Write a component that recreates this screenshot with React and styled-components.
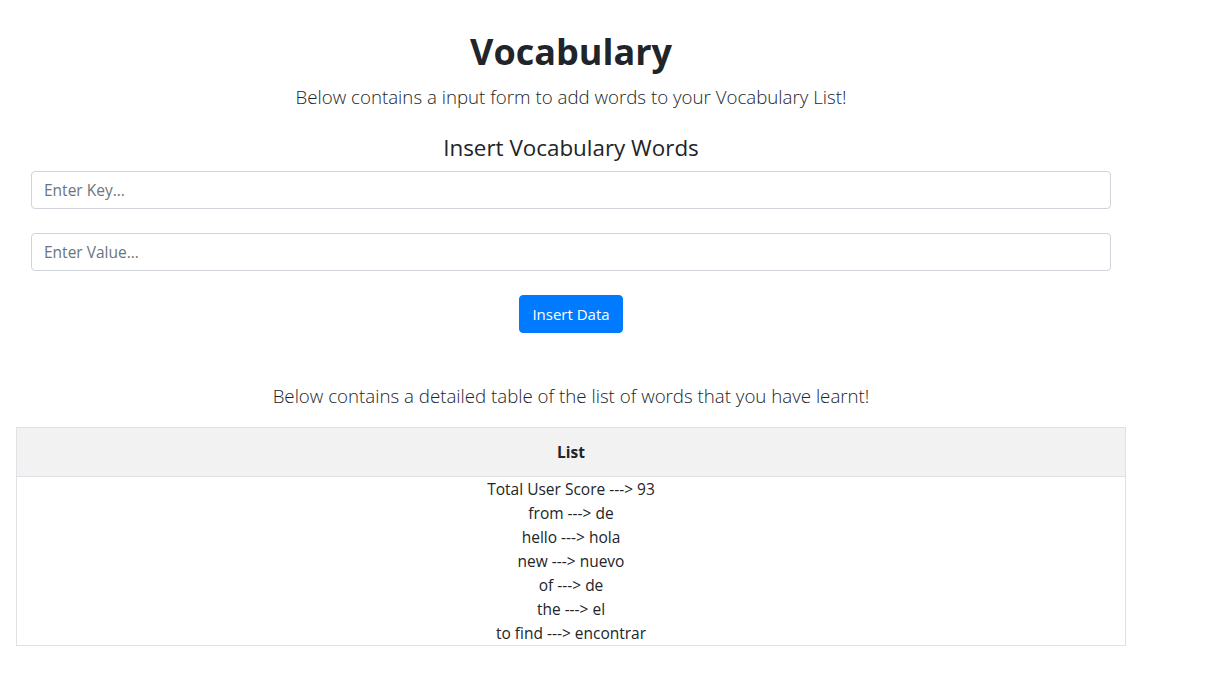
import styled, { createGlobalStyle } from "styled-components"

const GlobalStyle = createGlobalStyle`
    body {
        margin: 0;
        background: #fff;
        color: #212529;
        font-family: "Open Sans", "Noto Sans", sans-serif;
        font-size: 15.5px;
        line-height: 24px;
    }
`

const Page = styled.div`
    width: 1110px;
    margin: 0 16px;
    padding-top: 28px;
`
const Title = styled.h1`
    font-size: 36px;
    font-weight: 700;
    line-height: 48px;
    text-align: center;
    margin: 0 0 6px;
`
const Lead = styled.p`
    font-size: 18.7px;
    font-weight: 300;
    line-height: 30px;
    text-align: center;
    margin: ${props => props.top || 0}px 0 ${props => props.gap || 0}px;
`
const SubTitle = styled.h4`
    font-size: 22.4px;
    font-weight: 400;
    line-height: 29px;
    text-align: center;
    margin: 0 0 9px;
`
const Form = styled.form`
    display: flex;
    flex-direction: column;
    gap: 24px;
    padding: 0 15px;
`
const Input = styled.input`
    height: 38px;
    box-sizing: border-box;
    padding: 6px 12px;
    font-family: inherit;
    font-size: 15.5px;
    color: #495057;
    border: 1px solid #ced4da;
    border-radius: 4px;
    outline: none;
    &::placeholder {
        color: #6c757d;
    }
`
const Button = styled.button`
    align-self: center;
    height: 38px;
    padding: 0 12px;
    font-family: inherit;
    font-size: 15px;
    color: #fff;
    background: #007bff;
    border: 1px solid #007bff;
    border-radius: 4px;
`
const Table = styled.table`
    width: 100%;
    border-collapse: collapse;
    border: 1px solid #dee2e6;
`
const Th = styled.th`
    background: #f2f2f2;
    padding: 12px;
    font-weight: 700;
    border-bottom: 1px solid #dee2e6;
`
const Td = styled.td`
    padding: 0;
    text-align: center;
`
const Line = styled.div`
    line-height: 24px;
`

const words = [
    ["from", "de"],
    ["hello", "hola"],
    ["new", "nuevo"],
    ["of", "de"],
    ["the", "el"],
    ["to find", "encontrar"],
]

export default function App() {
    return (
        <>
            <GlobalStyle />
            <Page>
                <Title>Vocabulary</Title>
                <Lead gap={21}>Below contains a input form to add words to your Vocabulary List!</Lead>
                <SubTitle>Insert Vocabulary Words</SubTitle>
                <Form onSubmit={e => e.preventDefault()}>
                    <Input placeholder="Enter Key..." />
                    <Input placeholder="Enter Value..." />
                    <Button type="submit">Insert Data</Button>
                </Form>
                <Lead top={48} gap={16}>Below contains a detailed table of the list of words that you have learnt!</Lead>
                <Table>
                    <thead>
                        <tr><Th>List</Th></tr>
                    </thead>
                    <tbody>
                        <tr>
                            <Td>
                                <Line>Total User Score ---&gt; 93</Line>
                                {words.map(([key, value]) => (
                                    <Line key={key}>{key} ---&gt; {value}</Line>
                                ))}
                            </Td>
                        </tr>
                    </tbody>
                </Table>
            </Page>
        </>
    )
}
